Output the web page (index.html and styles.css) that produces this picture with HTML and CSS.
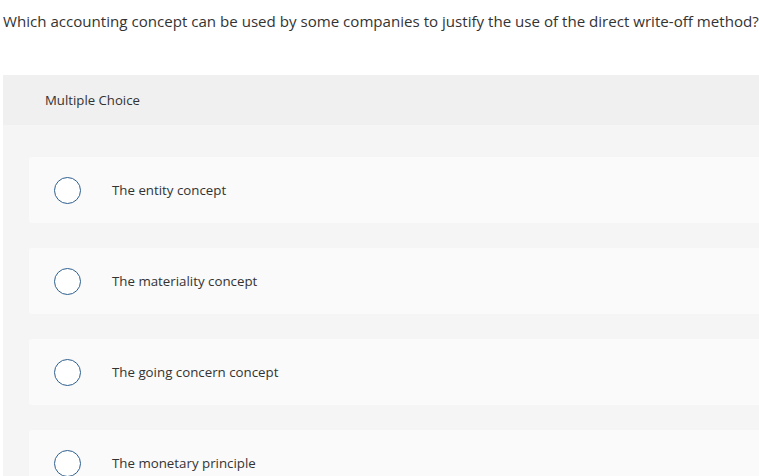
FILE: index.html
```html
<!DOCTYPE html>
<html>
<head>
<meta charset="utf-8">
<link rel="stylesheet" href="styles.css">
</head>
<body>
<div class="page">
  <p class="question">Which accounting concept can be used by some companies to justify the use of the direct write-off method?</p>
  <div class="panel">
    <div class="panel-head">Multiple Choice</div>
    <div class="options">
      <div class="option"><span class="radio"></span><span class="label">The entity concept</span></div>
      <div class="option"><span class="radio"></span><span class="label">The materiality concept</span></div>
      <div class="option"><span class="radio"></span><span class="label">The going concern concept</span></div>
      <div class="option"><span class="radio"></span><span class="label">The monetary principle</span></div>
    </div>
  </div>
</div>
</body>
</html>
```
FILE: styles.css
```css
html, body {
  margin: 0;
  padding: 0;
  background: #ffffff;
  overflow: hidden;
}
.page {
  width: 780px;
  font-family: "Open Sans", "Lato", sans-serif;
  color: #333333;
}
.question {
  margin: 0;
  padding: 11px 0 0 3px;
  height: 75px;
  box-sizing: border-box;
  font-size: 15.1px;
  line-height: 20px;
  white-space: nowrap;
  color: #333;
}
.panel {
  margin-left: 3px;
  background: #f5f5f5;
}
.panel-head {
  height: 50px;
  background: #f0f0f0;
  padding-left: 42px;
  display: flex;
  align-items: center;
  font-size: 13.2px;
}
.options {
  padding: 32px 0 0 26px;
  display: flex;
  flex-direction: column;
  gap: 25px;
}
.option {
  height: 66px;
  background: #fafafa;
  border-radius: 3px 0 0 3px;
  display: flex;
  align-items: center;
  padding-left: 25px;
}
.radio {
  width: 25px;
  height: 25px;
  border: 1.5px solid #2e5f8e;
  border-radius: 50%;
  background: #fff;
  flex: none;
}
.label {
  margin-left: 31px;
  font-size: 13.3px;
  color: #333;
}
```
